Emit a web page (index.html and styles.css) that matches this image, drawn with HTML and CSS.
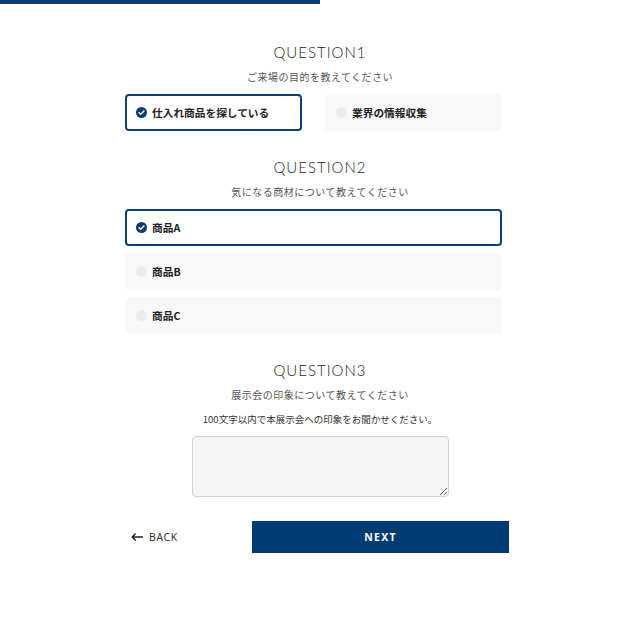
FILE: index.html
```html
<!DOCTYPE html>
<html lang="ja">
<head>
<meta charset="utf-8">
<title>アンケート</title>
<link rel="stylesheet" href="styles.css">
</head>
<body>
<div class="progress"><div class="progress-fill"></div></div>
<main class="form">
  <section class="question">
    <h2 class="q-title">QUESTION1</h2>
    <p class="q-sub">ご来場の目的を教えてください</p>
    <div class="options options-row">
      <label class="option is-selected">
        <span class="mark"><svg viewBox="0 0 12 12" width="11" height="11"><circle cx="6" cy="6" r="6" fill="#0b3a70"/><path d="M3.4 6.2 L5.2 7.9 L8.6 4.4" fill="none" stroke="#fff" stroke-width="1.6" stroke-linecap="round" stroke-linejoin="round"/></svg></span>
        <span class="option-text">仕入れ商品を探している</span>
      </label>
      <label class="option">
        <span class="mark mark-empty"></span>
        <span class="option-text">業界の情報収集</span>
      </label>
    </div>
  </section>

  <section class="question">
    <h2 class="q-title">QUESTION2</h2>
    <p class="q-sub">気になる商材について教えてください</p>
    <div class="options options-col">
      <label class="option is-selected">
        <span class="mark"><svg viewBox="0 0 12 12" width="11" height="11"><circle cx="6" cy="6" r="6" fill="#0b3a70"/><path d="M3.4 6.2 L5.2 7.9 L8.6 4.4" fill="none" stroke="#fff" stroke-width="1.6" stroke-linecap="round" stroke-linejoin="round"/></svg></span>
        <span class="option-text">商品A</span>
      </label>
      <label class="option">
        <span class="mark mark-empty"></span>
        <span class="option-text">商品B</span>
      </label>
      <label class="option">
        <span class="mark mark-empty"></span>
        <span class="option-text">商品C</span>
      </label>
    </div>
  </section>

  <section class="question">
    <h2 class="q-title">QUESTION3</h2>
    <p class="q-sub">展示会の印象について教えてください</p>
    <p class="q-note">100文字以内で本展示会への印象をお聞かせください。</p>
    <div class="text-wrap"><textarea class="answer"></textarea></div>
  </section>

  <div class="actions">
    <button class="back" type="button"><svg class="arrow" viewBox="0 0 12 8" width="12" height="8"><path d="M11.5 4 H1.2 M4.2 1 L1.2 4 L4.2 7" fill="none" stroke="#222" stroke-width="1.5" stroke-linecap="round" stroke-linejoin="round"/></svg>BACK</button>
    <button class="next" type="button">NEXT</button>
  </div>
</main>
</body>
</html>
```
FILE: styles.css
```css
* { box-sizing: border-box; }
body {
  margin: 0;
  background: #fff;
  font-family: "Noto Sans CJK JP", "Noto Sans", sans-serif;
  color: #222;
}
.progress { height: 4px; width: 100%; }
.progress-fill { height: 4px; width: 50%; background: #063b75; }

.form {
  width: 390px;
  margin-left: 125px;
  padding-top: 38px;
}
.question { margin-bottom: 26px; }
.q-title {
  margin: 0;
  text-align: center;
  font-family: "Lato", "Open Sans", sans-serif;
  font-weight: 300;
  font-size: 15px;
  line-height: 20px;
  letter-spacing: 1px;
  color: #1e1e1e;
}
.q-sub {
  margin: 7px 0 0;
  text-align: center;
  font-size: 10px;
  line-height: 16px;
  letter-spacing: 0.5px;
  color: #555;
}
.q-note {
  margin: 8px 0 0;
  text-align: center;
  font-size: 9.5px;
  line-height: 16px;
  color: #333;
}
.options { width: 377px; margin-top: 9px; }
.options-row { display: grid; grid-template-columns: 177px 177px; column-gap: 23px; }
.options-col { display: flex; flex-direction: column; gap: 7px; }
.option {
  display: flex;
  align-items: center;
  height: 37px;
  padding-left: 9px;
  border: 2px solid transparent;
  border-radius: 4px;
  background: #f8f8f8;
}
.option.is-selected { background: #fff; border-color: #113e70; }
.mark { width: 11px; height: 11px; display: flex; margin-right: 5px; }
.mark-empty { border-radius: 50%; background: #ececec; }
.option-text {
  font-size: 10.7px;
  font-weight: 700;
  color: #222;
  line-height: 16px;
}
.text-wrap { display: flex; justify-content: center; margin-top: 9px; }
.answer {
  width: 257px;
  height: 61px;
  margin-left: 1px;
  background: #f5f5f5;
  border: 1px solid #d3d3d3;
  border-radius: 4px;
  display: block;
}
.actions {
  display: flex;
  align-items: center;
  margin-top: -2px;
}
.back {
  background: none;
  border: 0;
  padding: 0 0 0 6px;
  width: 127px;
  text-align: left;
  font-family: "Noto Sans", sans-serif;
  font-size: 10.3px;
  letter-spacing: 0.7px;
  color: #333;
  display: flex;
  align-items: center;
}
.arrow { margin-right: 6px; }
.next {
  width: 257px;
  height: 32px;
  border: 0;
  background: #003b74;
  color: #fff;
  font-family: "Noto Sans", sans-serif;
  font-weight: 700;
  font-size: 10.5px;
  letter-spacing: 1.2px;
}
```
